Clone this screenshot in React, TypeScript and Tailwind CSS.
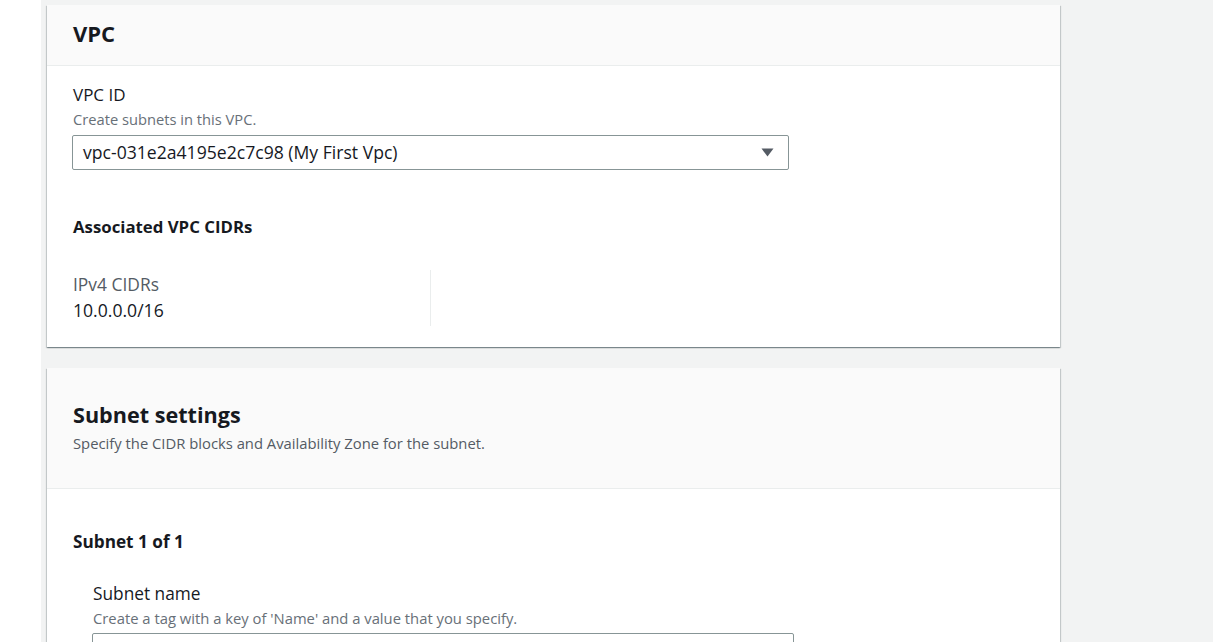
import React from "react";

const font = { fontFamily: '"Open Sans", "Noto Sans", sans-serif' };

function Card({ children }: { children: React.ReactNode }) {
  return (
    <div className="bg-white w-[1013px] shadow-[0_1px_1px_0_rgba(0,28,36,0.3),1px_1px_1px_0_rgba(0,28,36,0.15),-1px_1px_1px_0_rgba(0,28,36,0.15)]">
      {children}
    </div>
  );
}

export default function App() {
  return (
    <div className="flex w-[1213px] h-[642px] overflow-hidden text-[#16191f]" style={font}>
      <div className="w-[41px] shrink-0 bg-white" />
      <div className="flex-1 bg-[#f2f3f3] pl-[6px] pt-[5px] flex flex-col gap-[21px]">
        <Card>
          <div className="h-[61px] flex items-center px-[26px] pb-[5px] bg-[#fafafa] border-b border-[#eaeded]">
            <h2 className="text-[22px] font-bold leading-[28px]">VPC</h2>
          </div>
          <div className="px-[26px] pt-[18px] pb-[21px]">
            <div className="text-[17px] leading-[22px]">VPC ID</div>
            <div className="mt-[4px] text-[14.7px] leading-[18px] text-[#687078]">Create subnets in this VPC.</div>
            <div className="mt-[7px] ml-[-1px] w-[717px] h-[35px] border border-[#879596] rounded-[2px] flex items-center justify-between pl-[10px] pr-[14px]">
              <span className="text-[17.6px]">vpc-031e2a4195e2c7c98 (My First Vpc)</span>
              <svg width="13" height="9" viewBox="0 0 13 9">
                <path d="M0.5 0.5 L12.5 0.5 L6.5 8.5 Z" fill="#545b64" />
              </svg>
            </div>
            <div className="mt-[47px] text-[16.8px] font-bold leading-[20px]">Associated VPC CIDRs</div>
            <div className="mt-[33px] flex">
              <div className="w-[358px] h-[56px] border-r border-[#eaeded] pt-[3px]">
                <div className="text-[17.4px] leading-[22px] text-[#545b64]">IPv4 CIDRs</div>
                <div className="mt-[4px] text-[17.6px] leading-[22px]">10.0.0.0/16</div>
              </div>
            </div>
          </div>
        </Card>
        <Card>
          <div className="h-[121px] px-[26px] pt-[33px] bg-[#fafafa] border-b border-[#eaeded]">
            <h2 className="text-[21.6px] font-bold leading-[28px]">Subnet settings</h2>
            <div className="mt-[5px] text-[14.8px] leading-[18px] text-[#545b64]">
              Specify the CIDR blocks and Availability Zone for the subnet.
            </div>
          </div>
          <div className="px-[26px] pt-[42px] pb-[40px]">
            <div className="text-[17.2px] font-bold leading-[22px]">Subnet 1 of 1</div>
            <div className="pl-[20px] mt-[30px]">
              <div className="text-[17.3px] leading-[22px]">Subnet name</div>
              <div className="mt-[4px] text-[14.8px] leading-[18px] text-[#687078]">
                Create a tag with a key of 'Name' and a value that you specify.
              </div>
              <div className="mt-[6px] ml-[-1px] w-[702px] h-[35px] border border-[#879596] rounded-[2px]" />
            </div>
          </div>
        </Card>
      </div>
    </div>
  );
}
